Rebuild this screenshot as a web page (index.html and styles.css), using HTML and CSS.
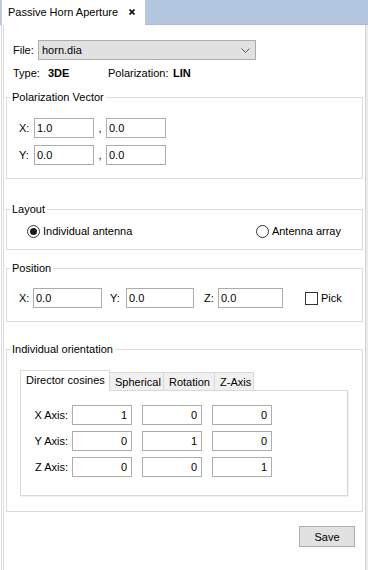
FILE: index.html
```html
<!DOCTYPE html>
<html>
<head>
<meta charset="utf-8">
<link rel="stylesheet" href="styles.css">
</head>
<body>
<div class="tabbar">
  <div class="doc-tab">
    <span class="doc-tab-title">Passive Horn Aperture</span>
    <svg class="close" width="6" height="6" viewBox="0 0 6 6"><path d="M0.5 0.5L5.5 5.5M5.5 0.5L0.5 5.5" stroke="#111" stroke-width="1.7" fill="none"/></svg>
  </div>
</div>
<div class="panel">
  <div class="file-row">
    <span class="file-label">File:</span>
    <div class="select">
      <span>horn.dia</span>
      <svg width="9" height="5" viewBox="0 0 9 5"><polyline points="0.5,0.5 4.5,4.5 8.5,0.5" stroke="#555" stroke-width="1" fill="none"/></svg>
    </div>
  </div>
  <div class="info-row">
    <span class="info-label w-type">Type:</span>
    <b class="info-value w-type-val">3DE</b>
    <span class="info-label w-pol">Polarization:</span>
    <b class="info-value">LIN</b>
  </div>

  <fieldset class="group g-pol">
    <legend>Polarization Vector</legend>
    <div class="group-body pol-body">
      <div class="vec-row">
        <span class="lbl-xy">X:</span>
        <input class="field w60" value="1.0">
        <span class="comma">,</span>
        <input class="field w60" value="0.0">
      </div>
      <div class="vec-row">
        <span class="lbl-xy">Y:</span>
        <input class="field w60" value="0.0">
        <span class="comma">,</span>
        <input class="field w60" value="0.0">
      </div>
    </div>
  </fieldset>

  <fieldset class="group g-layout">
    <legend>Layout</legend>
    <div class="group-body layout-body">
      <label class="radio-opt"><span class="radio checked"></span>Individual antenna</label>
      <label class="radio-opt"><span class="radio"></span>Antenna array</label>
    </div>
  </fieldset>

  <fieldset class="group g-pos">
    <legend>Position</legend>
    <div class="group-body pos-body">
      <span class="lbl-xy lbl-x">X:</span>
      <input class="field w69" value="0.0">
      <span class="lbl-xy lbl-y">Y:</span>
      <input class="field w68" value="0.0">
      <span class="lbl-xy lbl-z">Z:</span>
      <input class="field w65" value="0.0">
      <label class="check-opt"><span class="checkbox"></span>Pick</label>
    </div>
  </fieldset>

  <fieldset class="group g-orient">
    <legend>Individual orientation</legend>
    <div class="group-body orient-body">
      <div class="tabs">
        <div class="tab active t1">Director cosines</div>
        <div class="tab t2">Spherical</div>
        <div class="tab t3">Rotation</div>
        <div class="tab t4">Z-Axis</div>
      </div>
      <div class="tab-pane">
        <div class="mat-row">
          <span class="axis-label">X Axis:</span>
          <input class="field num" value="1">
          <input class="field num" value="0">
          <input class="field num" value="0">
        </div>
        <div class="mat-row">
          <span class="axis-label">Y Axis:</span>
          <input class="field num" value="0">
          <input class="field num" value="1">
          <input class="field num" value="0">
        </div>
        <div class="mat-row">
          <span class="axis-label">Z Axis:</span>
          <input class="field num" value="0">
          <input class="field num" value="0">
          <input class="field num" value="1">
        </div>
      </div>
    </div>
  </fieldset>

  <div class="actions">
    <button class="btn">Save</button>
  </div>
</div>
</body>
</html>
```

FILE: styles.css
```css
* { box-sizing: border-box; }
html, body {
  margin: 0;
  padding: 0;
  background: #ffffff;
  font-family: "Liberation Sans", Arial, sans-serif;
  font-size: 11px;
  color: #000;
}
.tabbar {
  height: 25px;
  background: #b4c7e1;
  border-bottom: 1px solid #a9bbd4;
  display: flex;
  align-items: flex-end;
  padding-left: 1px;
}
.doc-tab {
  width: 145px;
  height: 25px;
  margin-bottom: -1px;
  background: #fff;
  border-left: 1px solid #c9d3e0;
  border-right: 1px solid #c6c6c6;
  display: flex;
  align-items: center;
  padding-left: 6px;
  padding-bottom: 1px;
}
.doc-tab-title { width: 121px; }
.close { display: block; }

.panel {
  margin-left: 1px;
  width: 365px;
  height: 545px;
  border-left: 3px double #dcdcdc;
  border-right: 1px solid #d4d4d4;
  box-shadow: 2px 0 0 #ececec;
  padding-top: 15px;
}

.file-row {
  display: flex;
  align-items: center;
  padding-left: 9px;
  height: 20px;
}
.file-label { width: 25px; }
.select {
  width: 218px;
  height: 20px;
  background: #e1e1e1;
  border: 1px solid #adadad;
  display: flex;
  align-items: center;
  justify-content: space-between;
  padding: 0 5px 0 3px;
}
.select svg { display: block; }

.info-row {
  margin-top: 6px;
  height: 14px;
  line-height: 14px;
  display: flex;
  padding-left: 9px;
}
.w-type { width: 35px; }
.w-type-val { width: 60px; }
.w-pol { width: 65px; }
.info-value { font-weight: bold; }

.group {
  margin: 0 2px;
  padding: 0;
  border: 1px solid #dcdcdc;
  min-width: 0;
}
.group legend {
  margin-left: 3px;
  padding: 0 2px;
  line-height: 15px;
  height: 15px;
}
.group-body { padding-left: 12px; }

.g-pol { margin-top: 10px; }
.pol-body {
  padding-top: 13px;
  padding-bottom: 13px;
  display: flex;
  flex-direction: column;
  gap: 7px;
}
.vec-row {
  display: flex;
  align-items: center;
  height: 20px;
}
.lbl-xy { width: 15px; }

.field {
  height: 20px;
  border: 1px solid #acacac;
  background: #fff;
  font-family: inherit;
  font-size: 11px;
  color: #000;
  padding: 0 2px;
  margin: 0;
  outline: none;
}
.w60 { width: 60px; }
.w69 { width: 69px; }
.w68 { width: 68px; }
.w65 { width: 65px; }
.comma {
  width: 12px;
  text-align: center;
}

.g-layout { margin-top: 23px; }
.layout-body {
  padding: 7px 0 11px 20px;
  height: 14px;
  box-sizing: content-box;
  display: flex;
  align-items: center;
  justify-content: space-between;
  padding-right: 21px;
}
.radio-opt {
  display: flex;
  align-items: center;
  gap: 3px;
}
.radio {
  width: 13px;
  height: 13px;
  border: 1px solid #333;
  border-radius: 50%;
  background: #fff;
  display: flex;
  align-items: center;
  justify-content: center;
}
.radio.checked::after {
  content: "";
  width: 7px;
  height: 7px;
  border-radius: 50%;
  background: #1a1a1a;
}

.g-pos { margin-top: 11px; }
.pos-body {
  padding-top: 12px;
  padding-bottom: 13px;
  display: flex;
  align-items: center;
}
.lbl-x { width: 14px; }
.lbl-y { margin-left: 8px; width: 16px; }
.lbl-z { margin-left: 10px; width: 14px; }
.check-opt {
  margin-left: 22px;
  display: flex;
  align-items: center;
  gap: 3px;
}
.checkbox {
  width: 13px;
  height: 13px;
  border: 1px solid #333;
  background: #fff;
}

.g-orient { margin-top: 20px; }
.orient-body {
  padding: 13px 14px 15px 13px;
}
.tabs {
  display: flex;
  align-items: flex-end;
  height: 20px;
}
.tab {
  height: 18px;
  line-height: 18px;
  background: #f0f0f0;
  border: 1px solid #d9d9d9;
  border-left: none;
  border-bottom: none;
  padding-left: 5px;
}
.tab.active {
  height: 21px;
  line-height: 19px;
  margin-bottom: -1px;
  background: #fff;
  border-left: 1px solid #d9d9d9;
  position: relative;
  z-index: 1;
}
.t1 { width: 90px; }
.t2 { width: 54px; }
.t3 { width: 51px; }
.t4 { width: 39px; }

.tab-pane {
  height: 106px;
  border: 1px solid #d9d9d9;
  box-shadow: 1px 1px 0 #efefef;
  background: #fff;
  padding: 14px 0 0 10px;
  display: flex;
  flex-direction: column;
  gap: 6px;
}
.mat-row {
  display: flex;
  align-items: center;
  gap: 10px;
}
.axis-label {
  width: 37px;
  text-align: right;
  margin-right: -6px;
}
.num {
  width: 60px;
  text-align: right;
  padding-right: 4px;
}

.actions {
  display: flex;
  justify-content: flex-end;
  margin-top: 14px;
  padding-right: 10px;
}
.btn {
  width: 56px;
  height: 21px;
  background: #e1e1e1;
  border: 1px solid #adadad;
  font-family: inherit;
  font-size: 11px;
  color: #000;
  padding: 0;
  margin: 0;
}
```
